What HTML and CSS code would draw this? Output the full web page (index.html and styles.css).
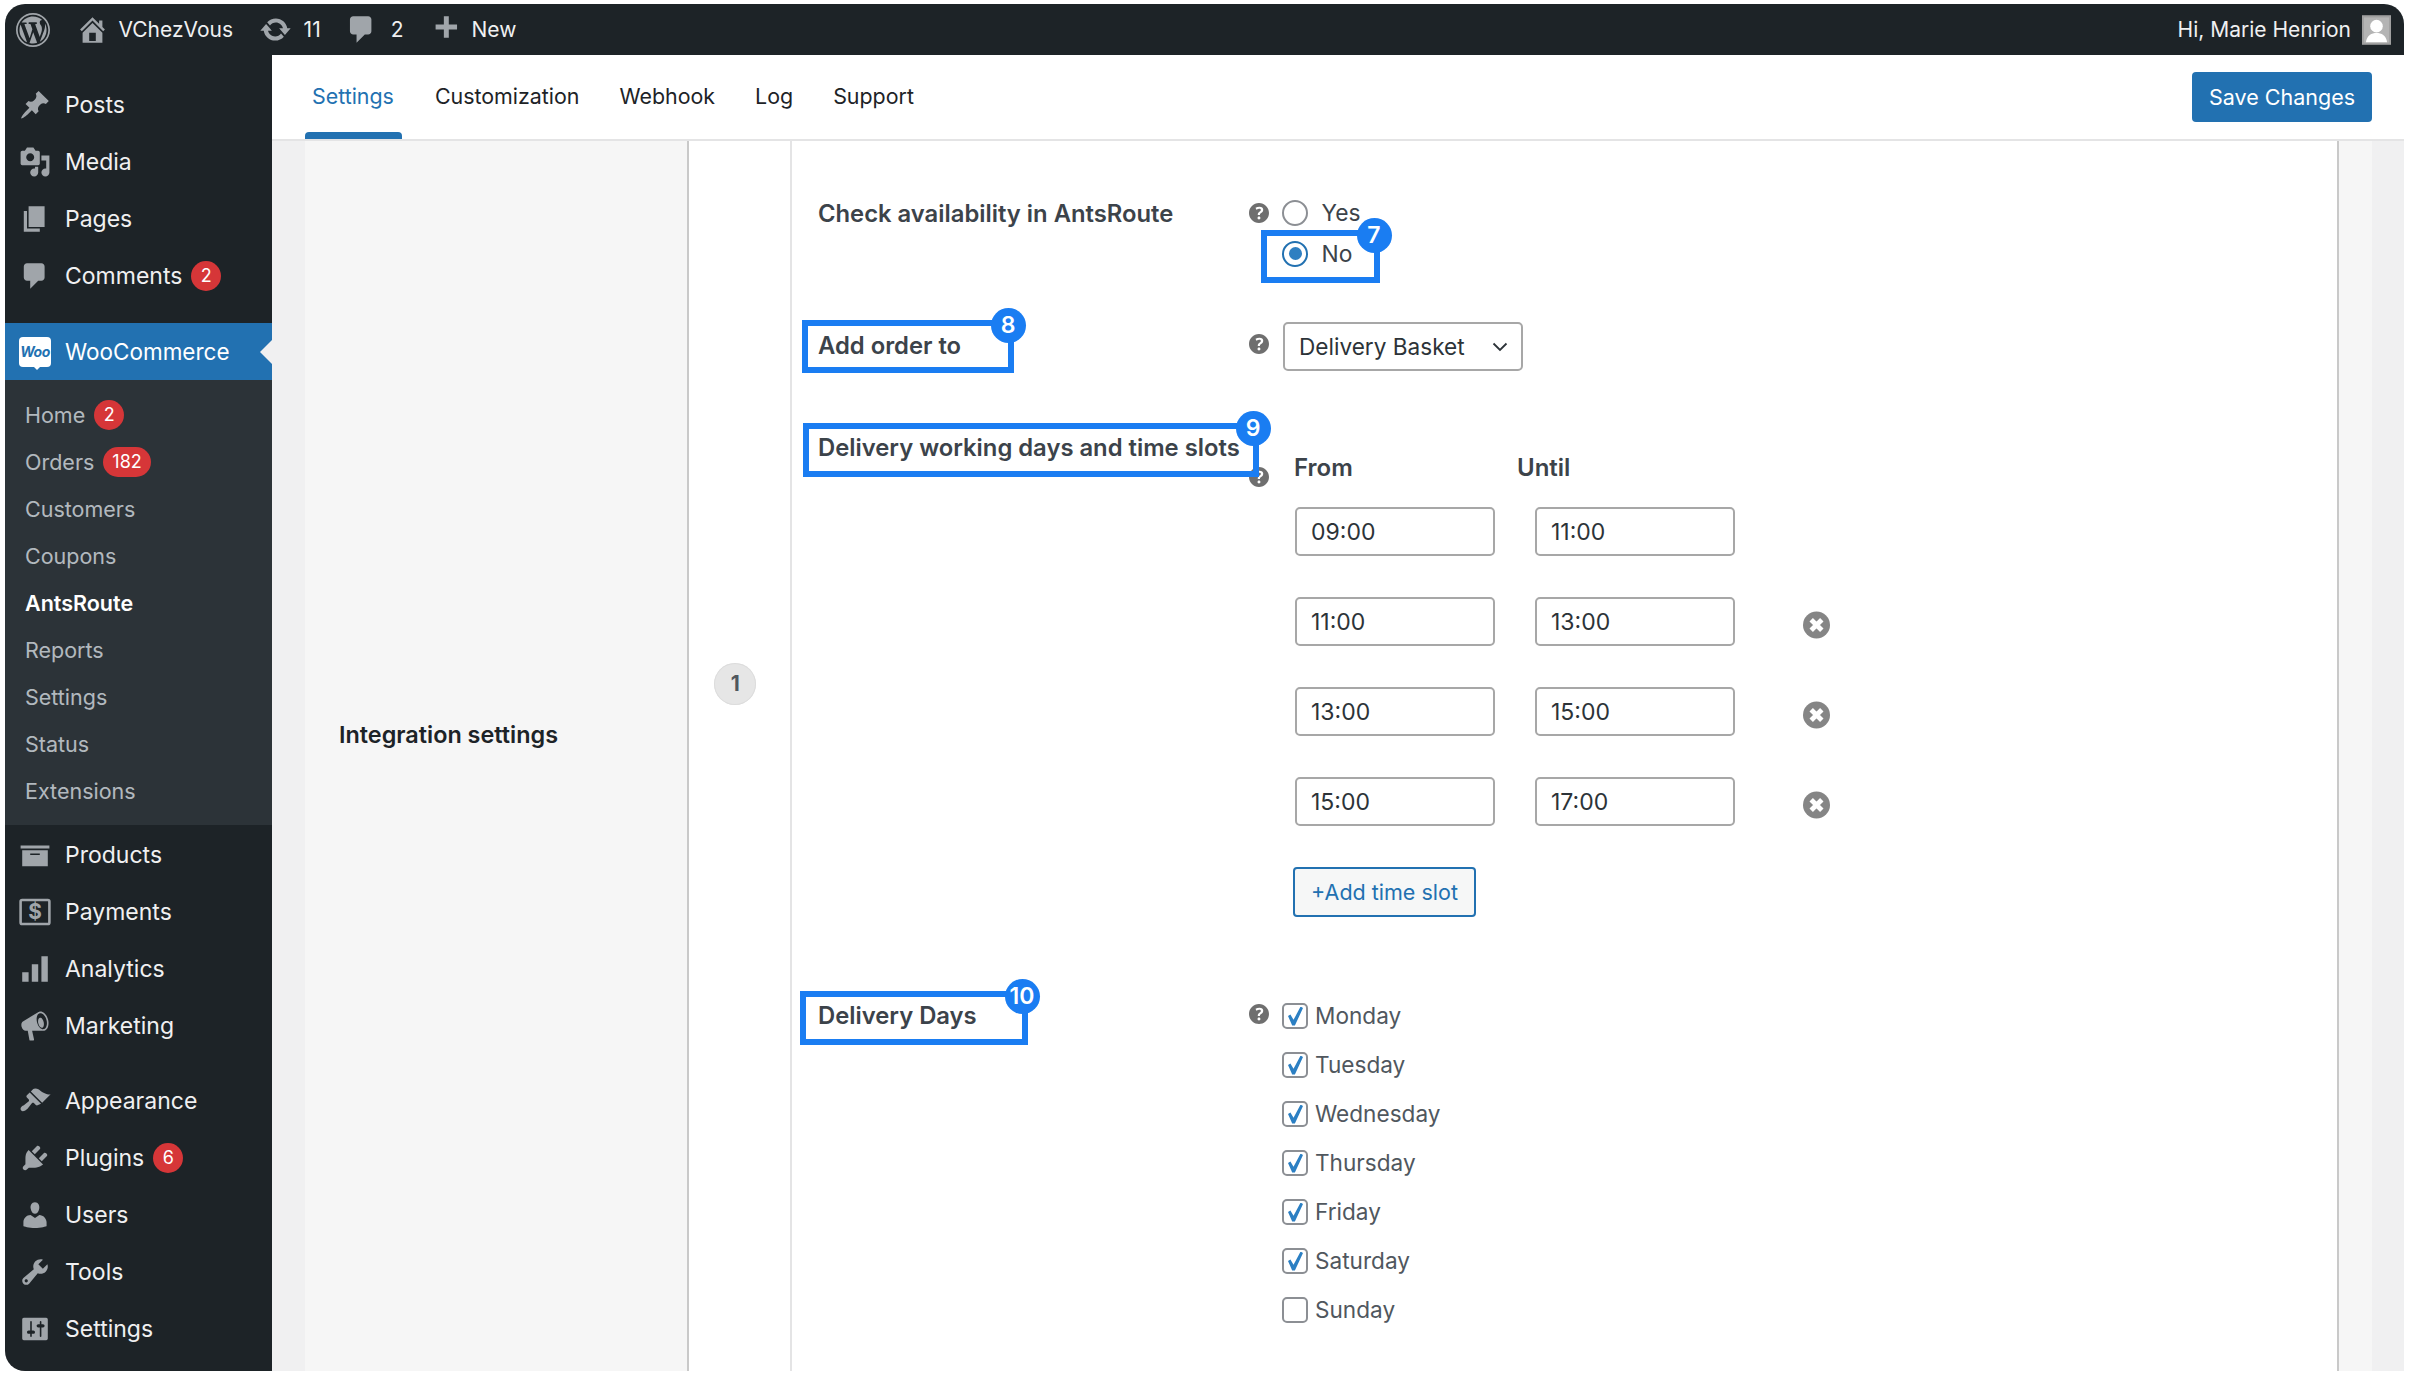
FILE: index.html
```html
<!DOCTYPE html>
<html>

<head>
  <title>AntsRoute settings</title>
  <link rel="stylesheet" href="styles.css">
</head>

<body>
  <div class="window">
    <header class="adminbar">
      <svg class="bar-logo" viewBox="0 0 20 20"><path d="M20 10c0-5.52-4.48-10-10-10S0 4.48 0 10s4.48 10 10 10 10-4.48 10-10zM10 1.01c4.97 0 8.99 4.02 8.99 8.99s-4.02 8.99-8.99 8.99S1.01 14.97 1.01 10 5.03 1.01 10 1.01zM8.01 14.82L4.96 6.61c.49-.03 1.05-.08 1.05-.08.43-.05.38-1.01-.06-.99 0 0-1.29.1-2.13.1-.15 0-.33 0-.52-.01 1.44-2.17 3.9-3.6 6.7-3.6 2.09 0 3.99.79 5.41 2.09-.6-.08-1.45.35-1.45 1.42 0 .66.38 1.22.79 1.88.31.54.5 1.22.5 2.21 0 1.34-1.27 4.48-1.27 4.48l-2.71-7.5c.48-.03.75-.16.75-.16.43-.05.38-1.1-.05-1.08 0 0-1.3.11-2.14.11-.78 0-2.11-.11-2.11-.11-.43-.02-.48 1.06-.05 1.08l.84.08 1.12 3.04zm6.02 2.15L16.64 10s.67-1.69.39-3.81c.63 1.14.94 2.42.94 3.81 0 2.96-1.56 5.58-3.94 6.97zM2.68 6.77L6.5 17.25c-2.67-1.3-4.47-4.08-4.47-7.25 0-1.16.2-2.23.65-3.23zm7.45 4.53l2.29 6.25c-.75.27-1.57.42-2.42.42-.72 0-1.41-.11-2.06-.3z"/></svg>
      <span class="bar-item bar-site">
        <svg class="bar-icon" viewBox="0 0 20 20"><path d="M16 8.5l1.53 1.53-1.06 1.06L10 4.62l-6.47 6.47-1.06-1.06L10 2.5l4 4v-2h2v4zm-6-2.46l6 5.99V18H4v-5.97zM12 17v-5H8v5h4z"/></svg>
        VChezVous
      </span>
      <span class="bar-item bar-updates">
        <svg class="bar-icon" viewBox="0 0 20 20"><path d="M10.2 3.28c3.53 0 6.43 2.61 6.92 6h2.08l-3.5 4-3.5-4h2.32c-.45-1.97-2.21-3.45-4.32-3.45-1.45 0-2.73.71-3.54 1.78L4.95 5.66C6.23 4.2 8.11 3.28 10.2 3.28zm-.4 13.44c-3.52 0-6.43-2.61-6.92-6H.8l3.5-4c1.17 1.33 2.33 2.67 3.5 4H5.48c.45 1.97 2.21 3.45 4.32 3.45 1.45 0 2.73-.71 3.54-1.78l1.71 1.95c-1.28 1.46-3.15 2.38-5.25 2.38z"/></svg>
        11
      </span>
      <span class="bar-item bar-comments">
        <svg class="bar-icon" viewBox="0 0 20 20"><path d="M5 2h9c1.1 0 2 .9 2 2v7c0 1.1-.9 2-2 2h-2l-5 5v-5H5c-1.1 0-2-.9-2-2V4c0-1.1.9-2 2-2z"/></svg>
        2
      </span>
      <span class="bar-item bar-new">
        <svg class="bar-icon" viewBox="0 0 20 20"><path d="M17 7v3h-5v5H9v-5H4V7h5V2h3v5h5z"/></svg>
        New
      </span>
      <span class="bar-user">
        Hi, Marie Henrion
        <svg class="bar-avatar" viewBox="0 0 30 30"><rect width="30" height="30" fill="#b4b4b4"/><circle cx="15" cy="11" r="6.5" fill="#fff"/><path d="M4 28c1-8 6-10 11-10s10 2 11 10z" fill="#fff"/><rect x="1" y="1" width="28" height="28" fill="none" stroke="#a0a0a0" stroke-width="2"/></svg>
      </span>
    </header>

    <div class="columns">
      <nav class="sidebar">
        <ul class="menu">
          <li><svg viewBox="0 0 20 20"><path d="M10.44 3.02l1.82-1.82 6.36 6.35-1.83 1.82c-1.05-.68-2.48-.57-3.41.36l-.75.75c-.92.93-1.04 2.35-.35 3.41l-1.83 1.82-2.41-2.41-2.8 2.79c-.42.42-3.38 2.71-3.8 2.29s1.86-3.39 2.28-3.81l2.79-2.79L4.1 9.36l1.83-1.82c1.05.69 2.48.57 3.4-.36l.75-.75c.93-.92 1.05-2.35.36-3.41z"/></svg>Posts</li>
          <li><svg viewBox="0 0 20 20"><path d="M13 11V4c0-.55-.45-1-1-1h-1.67L9 1H5L3.67 3H2c-.55 0-1 .45-1 1v7c0 .55.45 1 1 1h10c.55 0 1-.45 1-1zM7 4.5c1.38 0 2.5 1.12 2.5 2.5S8.38 9.5 7 9.5 4.5 8.38 4.5 7 5.62 4.5 7 4.5zM14 6h5v10.5c0 1.38-1.12 2.5-2.5 2.5S14 17.88 14 16.5s1.12-2.5 2.5-2.5c.17 0 .34.02.5.05V9h-3V6zm-4 8.05V13h2v3.5c0 1.38-1.12 2.5-2.5 2.5S7 17.88 7 16.5 8.12 14 9.5 14c.17 0 .34.02.5.05z"/></svg>Media</li>
          <li><svg viewBox="0 0 20 20"><path d="M6 15V2h10v13H6zm-1 1h8v2H3V5h2v11z"/></svg>Pages</li>
          <li><svg viewBox="0 0 20 20"><path d="M5 2h9c1.1 0 2 .9 2 2v7c0 1.1-.9 2-2 2h-2l-5 5v-5H5c-1.1 0-2-.9-2-2V4c0-1.1.9-2 2-2z"/></svg>Comments<span class="count">2</span></li>
        </ul>

        <div class="menu-current">
          <span class="woo-logo">Woo</span>
          WooCommerce
        </div>
        <ul class="submenu">
          <li>Home<span class="count">2</span></li>
          <li>Orders<span class="count">182</span></li>
          <li>Customers</li>
          <li>Coupons</li>
          <li class="submenu-current">AntsRoute</li>
          <li>Reports</li>
          <li>Settings</li>
          <li>Status</li>
          <li>Extensions</li>
        </ul>

        <ul class="menu menu-woo">
          <li><svg viewBox="0 0 20 20"><path d="M19 4v2H1V4h18zM2 7h16v10H2V7zm11 3V9H7v1h6z"/></svg>Products</li>
          <li><svg viewBox="0 0 20 20"><rect x="1" y="2.5" width="18" height="15" rx="1" fill="none" stroke="#a0a5aa" stroke-width="1.6"/><text x="10" y="14.4" class="dollar">$</text></svg>Payments</li>
          <li><svg viewBox="0 0 20 20"><path d="M18 18V2h-4v16h4zm-6 0V7H8v11h4zm-6 0v-6H2v6h4z"/></svg>Analytics</li>
          <li><svg viewBox="0 0 20 20"><path d="M18.15 5.94c.46 1.62.38 3.22-.02 4.48-.42 1.28-1.26 2.18-2.3 2.48-.16.06-.26.06-.4.06-.06.02-.12.02-.18.02-.06.02-.14.02-.22.02H8.2l1.2 5.5c.02.14-.06.26-.14.34-.08.1-.24.16-.34.16H6.95c-.1 0-.26-.06-.34-.16-.08-.08-.16-.2-.14-.34l-1-5.5H4.25l-.02-.02c-.5.06-1.08-.18-1.54-.62s-.88-1.08-1.06-1.88c-.24-.8-.2-1.56-.02-2.2.18-.62.58-1.08 1.06-1.3l.02-.02 9-5.4c.1-.06.18-.1.24-.16.06-.04.14-.08.24-.12.16-.08.28-.12.5-.18 1.04-.3 2.24.1 3.22.98s1.84 2.24 2.26 3.86zm-2.58 5.98h-.02c.4-.1.74-.34 1.04-.7.58-.7.86-1.76.86-3.04 0-.64-.1-1.3-.28-1.98-.34-1.36-1.02-2.5-1.78-3.24s-1.68-1.1-2.46-.88c-.82.22-1.4.96-1.7 2-.32 1.04-.28 2.36.06 3.72.38 1.36 1 2.5 1.8 3.24.78.74 1.62 1.1 2.48.88zm-2.54-7.08c.22-.04.42-.02.62.04.38.16.76.48 1.1 1s.56 1.12.7 1.84c.31 1.44.02 2.8-.58 3.2-.1.1-.18.16-.28.2-.06 0-.1.04-.16.04-.16-.04-.38-.04-.62-.2-.38-.16-.76-.48-1.1-1s-.56-1.14-.7-1.8c-.14-.74-.14-1.4 0-1.96.12-.54.38-1.04.78-1.2l.24-.16z"/></svg>Marketing</li>
        </ul>

        <ul class="menu menu-tools">
          <li><svg viewBox="0 0 20 20"><path d="M14.48 11.06L7.41 3.99l1.5-1.5c.5-.56 2.3-.47 3.51.32 1.21.8 1.43 1.28 2.91 2.1 1.18.64 2.45 1.26 4.45.85zm-.71.71L6.7 4.7 4.93 6.47c-.39.39-.39 1.02 0 1.41l1.06 1.06c.39.39.39 1.03 0 1.42-.6.6-1.43 1.11-2.21 1.69-.35.26-.7.53-1.01.84C1.43 13.23.4 14.98 1.4 15.98c.99 1 2.75-.03 4.09-1.36.31-.31.58-.66.85-1.02.57-.78 1.08-1.61 1.69-2.21.39-.39 1.02-.39 1.41 0l1.06 1.06c.39.39 1.02.39 1.41 0z"/></svg>Appearance</li>
          <li><svg viewBox="0 0 20 20"><path d="M13.11 4.36L9.87 7.6 8 5.73l3.24-3.24c.35-.34 1.05-.2 1.56.32.52.51.66 1.21.31 1.55zm-8 1.77l.91-1.12 9.01 9.01-1.19.84c-.71.71-2.63 1.16-3.82 1.16H6.14L4.9 17.26c-.59.59-1.54.59-2.12 0-.59-.58-.59-1.53 0-2.12l1.24-1.24v-3.88c0-1.13.4-3.19 1.09-3.89zm7.26 3.97l3.24-3.24c.34-.35 1.04-.21 1.55.31.52.51.66 1.21.31 1.55l-3.24 3.25z"/></svg>Plugins<span class="count">6</span></li>
          <li><svg viewBox="0 0 20 20"><path d="M10 9.25c-2.27 0-2.73-3.44-2.73-3.44C7 4.02 7.82 2 9.97 2c2.16 0 2.98 2.02 2.71 3.81 0 0-.41 3.44-2.68 3.44zm0 2.57L12.72 10c2.39 0 4.52 2.33 4.52 4.53v2.49s-3.65 1.13-7.24 1.13c-3.65 0-7.24-1.13-7.24-1.13v-2.49c0-2.25 1.94-4.48 4.47-4.48z"/></svg>Users</li>
          <li><svg viewBox="0 0 20 20"><path d="M16.68 9.77c-1.34 1.34-3.3 1.67-4.95.99l-5.41 6.52c-.99.99-2.59.99-3.58 0s-.99-2.59 0-3.57l6.52-5.42c-.68-1.65-.35-3.61.99-4.95 1.28-1.28 3.12-1.62 4.72-1.06l-2.89 2.89 2.82 2.82 2.86-2.87c.53 1.58.18 3.39-1.08 4.65zM3.81 16.21c.4.39 1.04.39 1.43 0 .4-.4.4-1.04 0-1.43-.39-.4-1.03-.4-1.43 0-.39.39-.39 1.03 0 1.43z"/></svg>Tools</li>
          <li><svg viewBox="0 0 20 20"><path d="M18 16V4c0-.55-.45-1-1-1H3c-.55 0-1 .45-1 1v12c0 .55.45 1 1 1h14c.55 0 1-.45 1-1zM8 11h1c.55 0 1 .45 1 1s-.45 1-1 1H8v1.5c0 .28-.22.5-.5.5s-.5-.22-.5-.5V13H6c-.55 0-1-.45-1-1s.45-1 1-1h1V5.5c0-.28.22-.5.5-.5s.5.22.5.5V11zm5-2h-1c-.55 0-1-.45-1-1s.45-1 1-1h1V5.5c0-.28.22-.5.5-.5s.5.22.5.5V7h1c.55 0 1 .45 1 1s-.45 1-1 1h-1v5.5c0 .28-.22.5-.5.5s-.5-.22-.5-.5V9z"/></svg>Settings</li>
        </ul>
      </nav>

      <main class="main">
        <div class="tabs">
          <a class="tab tab-active">Settings</a>
          <a class="tab">Customization</a>
          <a class="tab">Webhook</a>
          <a class="tab">Log</a>
          <a class="tab">Support</a>
          <button class="save-button">Save Changes</button>
        </div>

        <div class="panel">
          <div class="panel-title"><h2>Integration settings</h2></div>
          <div class="panel-step"><span class="step-number">1</span></div>

          <div class="panel-form">
            <div class="form-row">
              <div class="form-label">Check availability in AntsRoute</div>
              <svg class="help" viewBox="3 3 14 14"><path d="M17 10c0-3.87-3.14-7-7-7-3.87 0-7 3.13-7 7s3.13 7 7 7c3.86 0 7-3.13 7-7zm-6.3 1.48H9.14v-.43c0-.38.08-.7.24-.98s.46-.57.88-.89c.41-.29.68-.53.81-.71.14-.18.2-.39.2-.62 0-.25-.09-.44-.28-.58-.19-.13-.45-.19-.79-.19-.58 0-1.25.19-2 .57l-.64-1.28c.87-.49 1.8-.74 2.77-.74.81 0 1.45.2 1.92.58.48.39.71.91.71 1.55 0 .43-.09.8-.29 1.11-.19.32-.57.67-1.11 1.06-.38.28-.61.49-.71.63-.1.15-.15.34-.15.57v.35zm-1.47 2.74c-.18-.17-.27-.42-.27-.73 0-.33.08-.58.26-.75s.43-.25.77-.25c.32 0 .57.09.75.26s.27.42.27.74c0 .3-.09.55-.27.72-.18.18-.43.27-.75.27-.33 0-.58-.09-.76-.26z"/></svg>
              <div class="radios">
                <label class="radio"><input type="radio" name="avail">Yes</label>
                <label class="radio"><input type="radio" name="avail" checked>No
                  <span class="mark mark-no"><span class="mark-badge">7</span></span>
                </label>
              </div>
            </div>

            <div class="form-row row-basket">
              <div class="form-label">Add order to
                <span class="mark mark-order"><span class="mark-badge">8</span></span>
              </div>
              <svg class="help" viewBox="3 3 14 14"><path d="M17 10c0-3.87-3.14-7-7-7-3.87 0-7 3.13-7 7s3.13 7 7 7c3.86 0 7-3.13 7-7zm-6.3 1.48H9.14v-.43c0-.38.08-.7.24-.98s.46-.57.88-.89c.41-.29.68-.53.81-.71.14-.18.2-.39.2-.62 0-.25-.09-.44-.28-.58-.19-.13-.45-.19-.79-.19-.58 0-1.25.19-2 .57l-.64-1.28c.87-.49 1.8-.74 2.77-.74.81 0 1.45.2 1.92.58.48.39.71.91.71 1.55 0 .43-.09.8-.29 1.11-.19.32-.57.67-1.11 1.06-.38.28-.61.49-.71.63-.1.15-.15.34-.15.57v.35zm-1.47 2.74c-.18-.17-.27-.42-.27-.73 0-.33.08-.58.26-.75s.43-.25.77-.25c.32 0 .57.09.75.26s.27.42.27.74c0 .3-.09.55-.27.72-.18.18-.43.27-.75.27-.33 0-.58-.09-.76-.26z"/></svg>
              <div class="select-wrap">
                <select class="select"><option>Delivery Basket</option></select>
                <svg class="select-arrow" viewBox="0 0 16 10"><path d="M1.5 1.5L8 8l6.5-6.5" fill="none" stroke="#2c3338" stroke-width="1.8"/></svg>
              </div>
            </div>

            <div class="form-row row-slots">
              <div class="form-label">Delivery working days and time slots
                <span class="mark mark-slots"><span class="mark-badge">9</span></span>
              </div>
              <svg class="help help-slots" viewBox="3 3 14 14"><path d="M17 10c0-3.87-3.14-7-7-7-3.87 0-7 3.13-7 7s3.13 7 7 7c3.86 0 7-3.13 7-7zm-6.3 1.48H9.14v-.43c0-.38.08-.7.24-.98s.46-.57.88-.89c.41-.29.68-.53.81-.71.14-.18.2-.39.2-.62 0-.25-.09-.44-.28-.58-.19-.13-.45-.19-.79-.19-.58 0-1.25.19-2 .57l-.64-1.28c.87-.49 1.8-.74 2.77-.74.81 0 1.45.2 1.92.58.48.39.71.91.71 1.55 0 .43-.09.8-.29 1.11-.19.32-.57.67-1.11 1.06-.38.28-.61.49-.71.63-.1.15-.15.34-.15.57v.35zm-1.47 2.74c-.18-.17-.27-.42-.27-.73 0-.33.08-.58.26-.75s.43-.25.77-.25c.32 0 .57.09.75.26s.27.42.27.74c0 .3-.09.55-.27.72-.18.18-.43.27-.75.27-.33 0-.58-.09-.76-.26z"/></svg>
              <div class="slots">
                <div class="slots-head"><span>From</span><span>Until</span></div>
                <div class="slot">
                  <input class="slot-input" type="text" value="09:00">
                  <input class="slot-input" type="text" value="11:00">
                </div>
                <div class="slot">
                  <input class="slot-input" type="text" value="11:00">
                  <input class="slot-input" type="text" value="13:00">
                  <svg class="slot-remove" viewBox="0 0 28 28"><circle cx="14" cy="14" r="14"/><path d="M8.5 8.5l11 11M19.5 8.5l-11 11"/></svg>
                </div>
                <div class="slot">
                  <input class="slot-input" type="text" value="13:00">
                  <input class="slot-input" type="text" value="15:00">
                  <svg class="slot-remove" viewBox="0 0 28 28"><circle cx="14" cy="14" r="14"/><path d="M8.5 8.5l11 11M19.5 8.5l-11 11"/></svg>
                </div>
                <div class="slot">
                  <input class="slot-input" type="text" value="15:00">
                  <input class="slot-input" type="text" value="17:00">
                  <svg class="slot-remove" viewBox="0 0 28 28"><circle cx="14" cy="14" r="14"/><path d="M8.5 8.5l11 11M19.5 8.5l-11 11"/></svg>
                </div>
                <button class="add-slot">+Add time slot</button>
              </div>
            </div>

            <div class="form-row row-days">
              <div class="form-label">Delivery Days
                <span class="mark mark-days"><span class="mark-badge">10</span></span>
              </div>
              <svg class="help" viewBox="3 3 14 14"><path d="M17 10c0-3.87-3.14-7-7-7-3.87 0-7 3.13-7 7s3.13 7 7 7c3.86 0 7-3.13 7-7zm-6.3 1.48H9.14v-.43c0-.38.08-.7.24-.98s.46-.57.88-.89c.41-.29.68-.53.81-.71.14-.18.2-.39.2-.62 0-.25-.09-.44-.28-.58-.19-.13-.45-.19-.79-.19-.58 0-1.25.19-2 .57l-.64-1.28c.87-.49 1.8-.74 2.77-.74.81 0 1.45.2 1.92.58.48.39.71.91.71 1.55 0 .43-.09.8-.29 1.11-.19.32-.57.67-1.11 1.06-.38.28-.61.49-.71.63-.1.15-.15.34-.15.57v.35zm-1.47 2.74c-.18-.17-.27-.42-.27-.73 0-.33.08-.58.26-.75s.43-.25.77-.25c.32 0 .57.09.75.26s.27.42.27.74c0 .3-.09.55-.27.72-.18.18-.43.27-.75.27-.33 0-.58-.09-.76-.26z"/></svg>
              <div class="days">
                <label class="day"><input type="checkbox" checked>Monday</label>
                <label class="day"><input type="checkbox" checked>Tuesday</label>
                <label class="day"><input type="checkbox" checked>Wednesday</label>
                <label class="day"><input type="checkbox" checked>Thursday</label>
                <label class="day"><input type="checkbox" checked>Friday</label>
                <label class="day"><input type="checkbox" checked>Saturday</label>
                <label class="day"><input type="checkbox">Sunday</label>
              </div>
            </div>
          </div>
        </div>
      </main>
    </div>
  </div>
</body>
</html>
```

FILE: styles.css
```css
html, body { margin: 0; padding: 0; height: 100%; background: #fff; overflow: hidden; }

body {
  font-family: "Inter", "Liberation Sans", sans-serif;
  font-size: 21.5px;
  color: #3c434a;
}

ul { list-style: none; margin: 0; padding: 0; }

.window {
  margin: 4px 5px 0;
  height: 1367px;
  display: flex;
  flex-direction: column;
  border-radius: 20px 20px 0 20px;
  overflow: hidden;
  background: #f0f0f1;
}

/* admin bar */
.adminbar {
  flex: none;
  height: 51px;
  display: flex;
  align-items: center;
  background: #1d2327;
  color: #f0f0f1;
  fill: #a0a5aa;
  font-size: 21px;
}

.bar-logo { width: 34px; height: 34px; margin-left: 11px; }

.bar-item { display: flex; align-items: center; }

.bar-icon { width: 33px; height: 33px; }

.bar-site { margin-left: 25.5px; gap: 10px; }
.bar-updates { margin-left: 26px; gap: 11.5px; }
.bar-comments { margin-left: 24.5px; gap: 12.5px; }
.bar-new { margin-left: 25.5px; gap: 9.5px; }

.bar-user {
  margin-left: auto;
  margin-right: 13px;
  display: flex;
  align-items: center;
  gap: 11px;
}

.bar-avatar { width: 29px; height: 30px; }

/* sidebar */
.columns { flex: 1; display: flex; min-height: 0; }

.sidebar {
  flex: none;
  width: 267px;
  padding-top: 21px;
  background: #1d2327;
  color: #f0f0f1;
  font-size: 23px;
}

.menu li {
  height: 57px;
  display: flex;
  align-items: center;
}

.menu svg {
  flex: none;
  width: 32px;
  height: 32px;
  margin: 0 14px;
  fill: #a0a5aa;
}

.dollar {
  font-size: 13px;
  font-weight: 700;
  text-anchor: middle;
}

.count {
  min-width: 30px;
  height: 30px;
  box-sizing: border-box;
  padding: 0 9px;
  margin-left: 9px;
  border-radius: 15px;
  background: #d63638;
  color: #fff;
  font-size: 18px;
  line-height: 30px;
  text-align: center;
}

.menu-current {
  position: relative;
  height: 57px;
  margin-top: 19px;
  display: flex;
  align-items: center;
  background: #2271b1;
  color: #fff;
  font-size: 22.5px;
}

.menu-current::after {
  content: "";
  position: absolute;
  right: 0;
  top: 50%;
  margin-top: -12px;
  border: 12px solid transparent;
  border-left: 0;
  border-right-color: #f0f0f1;
}

.woo-logo {
  position: relative;
  flex: none;
  width: 32px;
  height: 30px;
  margin: 0 14px;
  border-radius: 4px;
  background: #fff;
  color: #2271b1;
  font-size: 14px;
  font-style: italic;
  font-weight: 700;
  line-height: 30px;
  text-align: center;
  letter-spacing: -.5px;
}

.woo-logo::after {
  content: "";
  position: absolute;
  left: 15px;
  bottom: -3px;
  border: 3px solid transparent;
  border-bottom: 0;
  border-top-color: #fff;
}

.submenu {
  padding: 11px 0 11px;
  background: #2c3338;
  color: rgba(240, 246, 252, .7);
  font-size: 21.5px;
}

.submenu li {
  height: 47px;
  padding-left: 20px;
  display: flex;
  align-items: center;
}

.submenu .submenu-current { color: #fff; font-weight: 600; }

.menu-woo { margin-top: 1px; }
.menu-tools { margin-top: 18px; }

/* main */
.main {
  flex: 1;
  min-width: 0;
  display: flex;
  flex-direction: column;
}

.tabs {
  flex: none;
  height: 84px;
  padding: 0 32px 0 33px;
  display: flex;
  align-items: center;
  background: #fff;
  border-bottom: 2px solid #e4e4e5;
  font-size: 21.4px;
}

.tab {
  position: relative;
  height: 100%;
  margin: 0 33px 0 7px;
  padding-bottom: 2px;
  box-sizing: border-box;
  display: flex;
  align-items: center;
  color: #1d2327;
}

.tab-active { color: #2271b1; margin-right: 34px; }

.tab-active::after {
  content: "";
  position: absolute;
  left: -7px;
  right: -8px;
  bottom: 0;
  height: 7px;
  border-radius: 4px 4px 0 0;
  background: #2271b1;
}

.save-button {
  margin-left: auto;
  width: 180px;
  height: 50px;
  border: 0;
  border-radius: 4px;
  background: #2271b1;
  color: #fff;
  font: inherit;
  font-size: 21.5px;
}

.panel {
  flex: 1;
  min-height: 0;
  margin: 0 32px 0 33px;
  display: flex;
  background: #f6f6f6;
}

.panel-title {
  flex: none;
  width: 384px;
  padding: 0 0 43px 34px;
  box-sizing: border-box;
  display: flex;
  align-items: center;
  border-right: 2px solid #c9c9c9;
}

.panel-title h2 {
  margin: 0;
  color: #1d2327;
  font-size: 23.4px;
  font-weight: 600;
}

.panel-step {
  flex: none;
  width: 102.5px;
  padding: 0 8px 144px 0;
  box-sizing: border-box;
  display: flex;
  align-items: center;
  justify-content: center;
  background: #fff;
  border-right: 2px solid #e4e4e5;
}

.step-number {
  width: 42px;
  height: 42px;
  border-radius: 50%;
  background: #e6e6e6;
  box-shadow: inset 0 0 0 1px #dcdcdc;
  color: #50575e;
  font-size: 21px;
  font-weight: 700;
  line-height: 42px;
  text-align: center;
}

.panel-form {
  flex: 1;
  margin-right: 33px;
  padding: 51px 0 0 25.5px;
  background: #fff;
  border-right: 2px solid #c9c9c9;
}

/* form rows */
.form-row { display: flex; align-items: flex-start; }

.form-label {
  position: relative;
  flex: none;
  width: 431px;
  padding-left: 1px;
  color: #3c434a;
  font-size: 23.8px;
  font-weight: 600;
  line-height: 44px;
}

.help {
  flex: none;
  width: 20px;
  height: 20px;
  margin: 11px 13px 0 0;
  fill: #6f6f6f;
}

.radios { display: flex; flex-direction: column; }

.radio {
  position: relative;
  height: 41px;
  display: flex;
  align-items: center;
  gap: 13.5px;
  font-size: 22.8px;
}

.radio input {
  appearance: none;
  flex: none;
  width: 26px;
  height: 26px;
  margin: 0;
  display: grid;
  place-items: center;
  border: 2px solid #8c8f94;
  border-radius: 50%;
  background: #fff;
}

.radio input:checked { border-color: #2271b1; }

.radio input:checked::before {
  content: "";
  width: 13px;
  height: 13px;
  border-radius: 50%;
  background: #2f7fc1;
}

.row-basket { margin-top: 47.5px; align-items: center; }
.row-basket .help { margin-top: 0; margin-bottom: 4px; }

.select-wrap { position: relative; margin-left: 1px; }

.select {
  appearance: none;
  display: block;
  width: 239.5px;
  height: 49px;
  padding: 0 14px;
  border: 2px solid #a7a7a7;
  border-radius: 5px;
  background: #fff;
  color: #2c3338;
  font: inherit;
  font-size: 22.6px;
}

.select-arrow {
  position: absolute;
  right: 15px;
  top: 20px;
  width: 16px;
  height: 10px;
}

.row-slots { margin-top: 57px; }
.row-slots .form-label { line-height: 40px; }
.help-slots { margin-top: 39px; }

.slots-head {
  height: 40px;
  margin-top: 20px;
  padding-left: 12px;
  display: grid;
  grid-template-columns: 223px auto;
  font-size: 24px;
  font-weight: 600;
  line-height: 40px;
}

.slot {
  height: 49px;
  margin: 0 0 41px 13px;
  display: flex;
  gap: 40px;
}

.slots-head + .slot { margin-top: 19.5px; }

.slot-input {
  width: 200px;
  height: 49px;
  padding: 0 14px;
  box-sizing: border-box;
  border: 2px solid #a7a7a7;
  border-radius: 5px;
  color: #2c3338;
  font: inherit;
  font-size: 23px;
}

.slot-remove {
  width: 27px;
  height: 28px;
  margin: 14px 0 0 27.5px;
  fill: #858585;
}

.slot-remove path {
  fill: none;
  stroke: #fff;
  stroke-width: 5;
}

.add-slot {
  display: block;
  width: 183px;
  height: 50px;
  margin: 0 0 0 11px;
  border: 2px solid #2271b1;
  border-radius: 4px;
  background: #f6f7f7;
  color: #2271b1;
  font: inherit;
}

.row-days { margin-top: 74px; }
.row-days .form-label { line-height: 49px; }
.row-days .help { margin-top: 13px; }

.days { display: flex; flex-direction: column; }

.day {
  height: 49px;
  display: flex;
  align-items: center;
  gap: 7px;
  color: #50575e;
  font-size: 22.6px;
}

.day input {
  appearance: none;
  flex: none;
  width: 26px;
  height: 26px;
  margin: 0;
  position: relative;
  border: 2px solid #8c8f94;
  border-radius: 5px;
  background: #fff;
}

.day input:checked::before {
  content: "";
  position: absolute;
  left: 4px;
  top: 2px;
  width: 15px;
  height: 19px;
  background: #2b7fc3;
  clip-path: polygon(0 50%, 16% 42%, 37% 70%, 84% 0, 100% 8%, 46% 100%, 28% 100%);
}

/* blue annotations laid over the form */
.mark {
  position: absolute;
  box-sizing: border-box;
  border: 6px solid #1a7df2;
  pointer-events: none;
}

.mark-badge {
  position: absolute;
  top: -18px;
  right: -17.5px;
  width: 35px;
  height: 35px;
  border-radius: 50%;
  background: #1a7df2;
  color: #fff;
  font-size: 23px;
  font-weight: 600;
  line-height: 35px;
  text-align: center;
}

.mark-no { left: -21px; top: -3px; width: 119px; height: 53px; }
.mark-order { left: -15px; top: -4px; width: 212px; height: 53px; }
.mark-slots { left: -14px; top: -5px; width: 456px; height: 54px; }
.mark-days { left: -17px; top: -0.5px; width: 228px; height: 54px; }
```
